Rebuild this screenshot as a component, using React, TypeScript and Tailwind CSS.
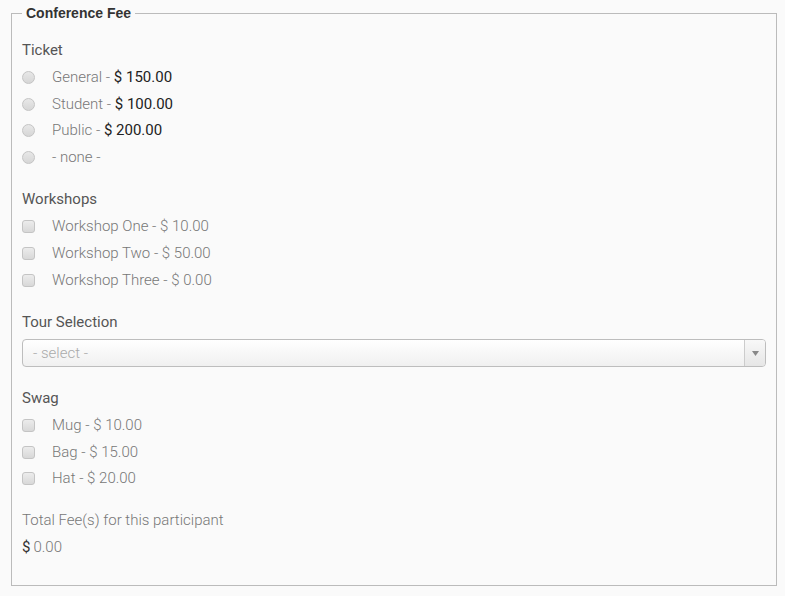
const Radio = () => (
  <span className="inline-block w-[13px] h-[13px] rounded-full border border-[#c4c4c4] bg-gradient-to-b from-[#e8e8e8] to-[#d6d6d6]" />
)

const Check = () => (
  <span className="inline-block w-[13px] h-[13px] rounded-[3px] border border-[#c4c4c4] bg-gradient-to-b from-[#ececec] to-[#d8d8d8]" />
)

const Row = ({ box, h = "h-[27px]", children }: { box: "radio" | "check"; h?: string; children: React.ReactNode }) => (
  <div className={`${h} flex items-center`}>
    <div className="w-[30px] flex items-center">{box === "radio" ? <Radio /> : <Check />}</div>
    <span className="text-[#777]">{children}</span>
  </div>
)

const Label = ({ children }: { children: React.ReactNode }) => (
  <div className="h-[27px] flex items-center text-[#555] font-normal">{children}</div>
)

const Price = ({ v }: { v: string }) => <span className="font-normal text-[#222]">$ {v}</span>

const App = () => {
  return (
    <div className="bg-[#fafafa] w-[785px] h-[596px] pl-[11px] pr-[8px]" style={{ fontFamily: "Roboto, sans-serif" }}>
      <fieldset className="border border-[#bbb] px-[10px] pb-[25px] text-[15px] font-light h-[586px]">
        <legend
          className="px-[4px] text-[14px] leading-[26px] font-bold text-[#333]"
          style={{ fontFamily: "'Liberation Sans', Arial, sans-serif" }}
        >
          Conference Fee
        </legend>
        <div className="pt-[11px]">
          <Label>Ticket</Label>
          <Row box="radio">General - <Price v="150.00" /></Row>
          <Row box="radio" h="h-[26px]">Student - <Price v="100.00" /></Row>
          <Row box="radio">Public - <Price v="200.00" /></Row>
          <Row box="radio">- none -</Row>

          <div className="mt-[15px]">
            <Label>Workshops</Label>
            <Row box="check">Workshop One - $ 10.00</Row>
            <Row box="check">Workshop Two - $ 50.00</Row>
            <Row box="check">Workshop Three - $ 0.00</Row>
          </div>

          <div className="mt-[15px]">
            <Label>Tour Selection</Label>
            <div className="mt-[3px] h-[28px] flex rounded-[4px] border border-[#bdbdbd] bg-gradient-to-b from-white to-[#f0f0f0] overflow-hidden">
              <div className="flex-1 flex items-center pl-[10px] text-[#aaa]">- select -</div>
              <div className="w-[21px] border-l border-[#ccc] flex items-center justify-center bg-gradient-to-b from-[#f8f8f8] to-[#e6e6e6]">
                <svg width="7" height="5" viewBox="0 0 7 5"><path d="M0 0h7L3.5 5z" fill="#888" /></svg>
              </div>
            </div>
          </div>

          <div className="mt-[18px]">
            <Label>Swag</Label>
            <Row box="check">Mug - $ 10.00</Row>
            <Row box="check" h="h-[26px]">Bag - $ 15.00</Row>
            <Row box="check">Hat - $ 20.00</Row>
          </div>

          <div className="mt-[15px]">
            <div className="h-[27px] flex items-center text-[#777]">Total Fee(s) for this participant</div>
            <div className="h-[26px] flex items-center text-[#777]">
              <span className="font-normal text-[#333] mr-[3px]">$</span>0.00
            </div>
          </div>
        </div>
      </fieldset>
    </div>
  )
}

export default App
